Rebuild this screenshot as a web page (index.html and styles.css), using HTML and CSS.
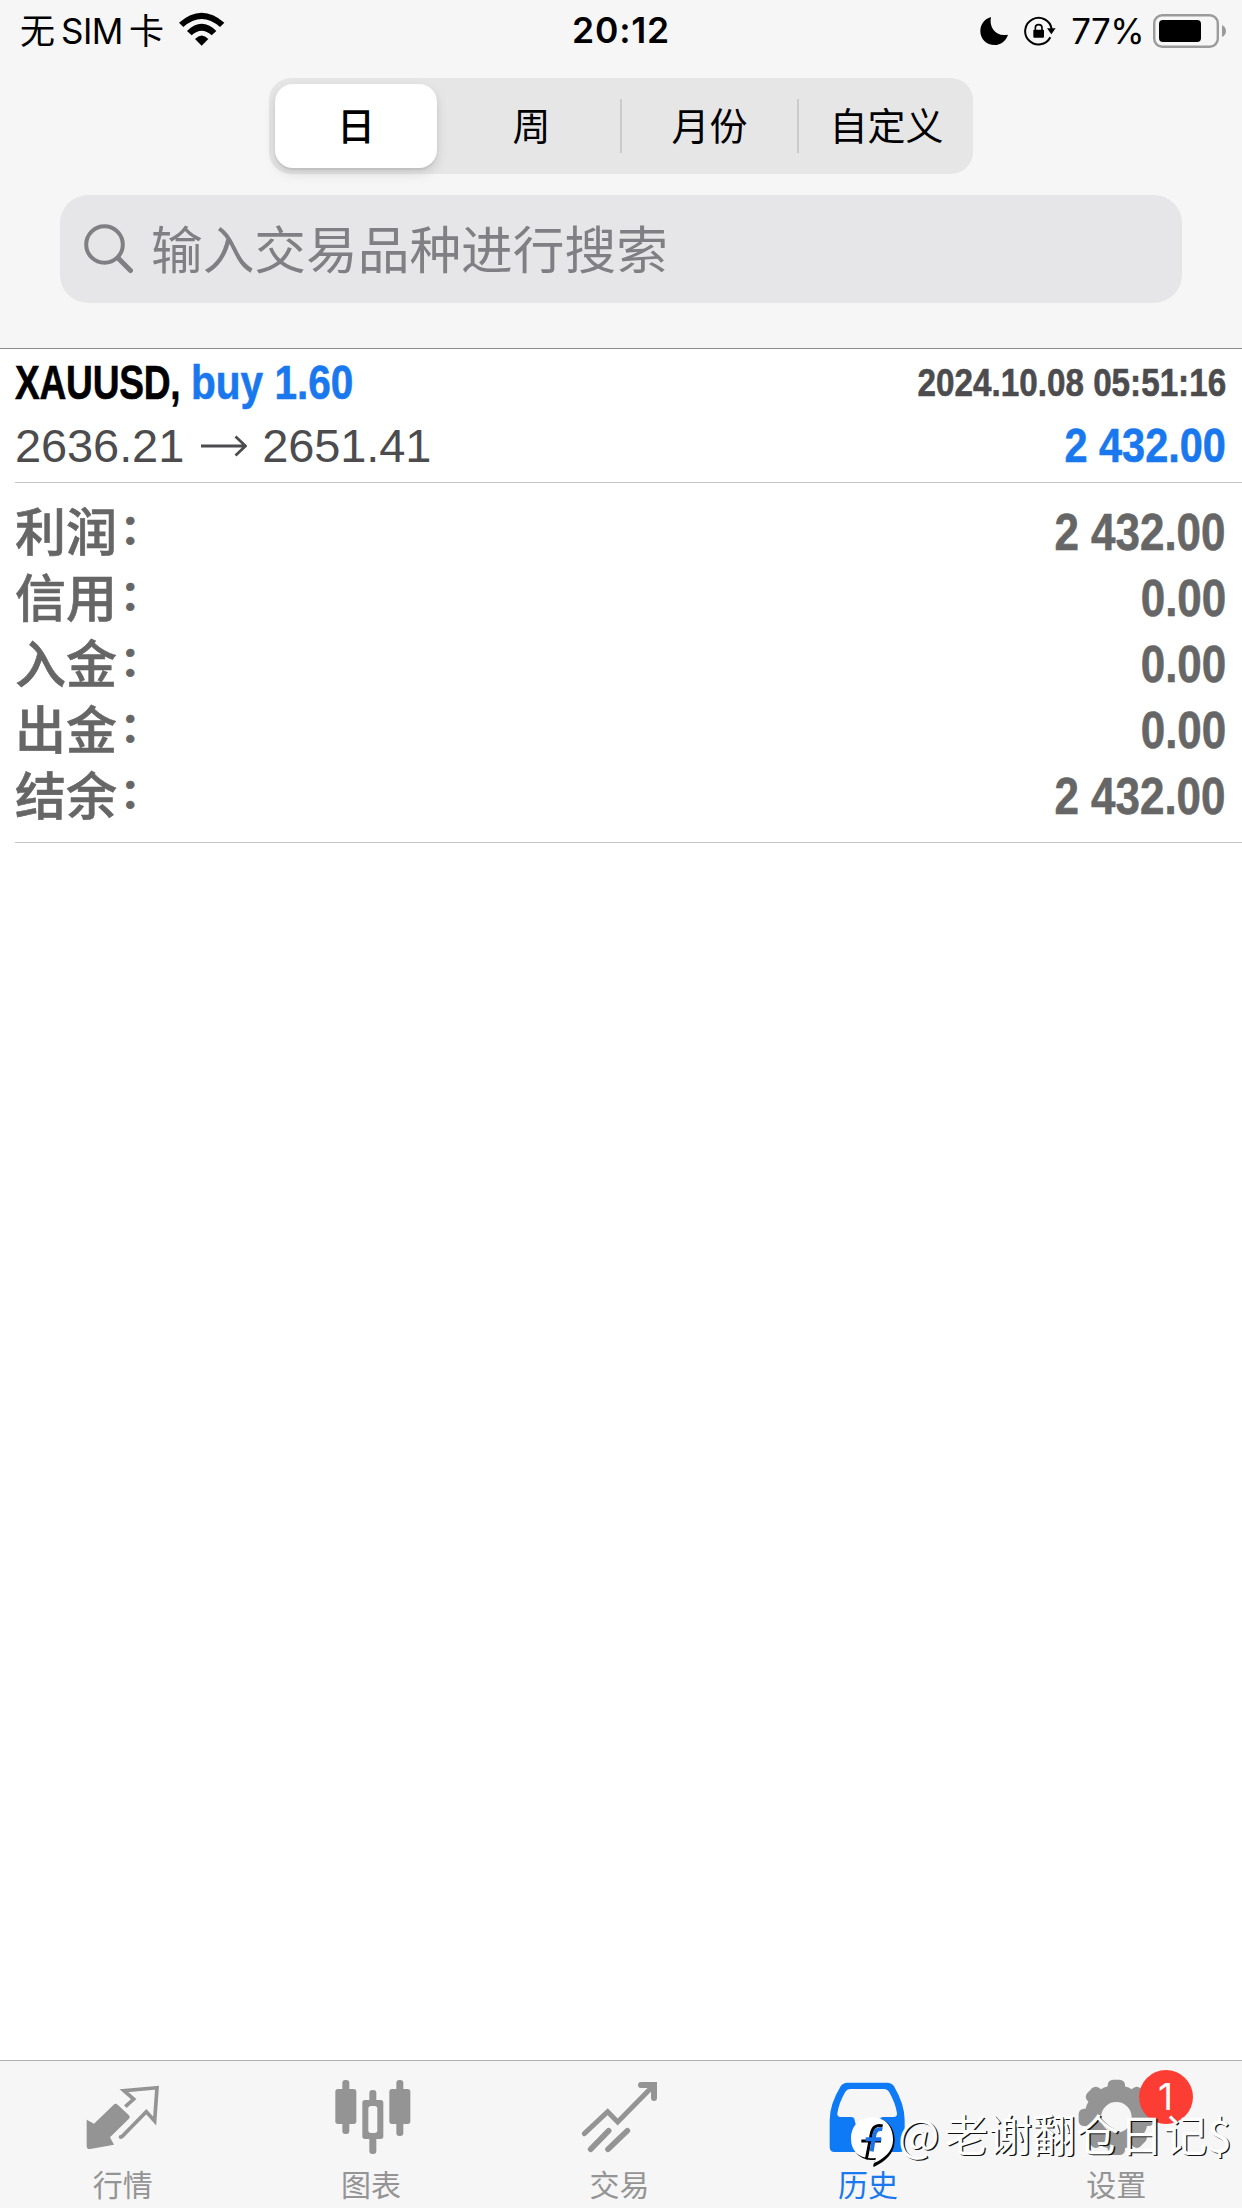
FILE: index.html
```html
<!DOCTYPE html>
<html lang="zh-CN">
<head>
    <meta charset="UTF-8">
    <meta name="viewport" content="width=device-width, initial-scale=1.0">
    <title>历史</title>
    <link rel="stylesheet" href="styles.css">
</head>
<body>
    <div class="app">
        <header class="header">
            <div class="status-bar">
                <div class="status-left">
                    <span class="carrier">无<span class="sim">SIM</span>卡</span>
                    <svg class="wifi" width="46" height="34" viewBox="538 37 138 102">
                        <path d="M538 69Q606 9 674 69L661 82Q606 34 551 82Z"/>
                        <path d="M562 94Q606 51 650 94L636 107Q606 80 576 107Z"/>
                        <path d="M586 118Q606 97 626 118L606 138Z"/>
                    </svg>
                </div>
                <span class="time">20:12</span>
                <div class="status-right">
                    <svg class="moon" width="28" height="28" viewBox="302 51 84 84">
                        <path d="M335 51C328 82 350 112 386 104C380 123 364 135 346 135C321 135 303 117 303 93C303 73 315 57 335 51Z"/>
                    </svg>
                    <svg class="lock" width="32" height="30" viewBox="433 51 96 90">
                        <path d="M512 115A40 40 0 1 1 516 90" fill="none" stroke="#000" stroke-width="6"/>
                        <path d="M502 88H528L515 106Z"/>
                        <rect x="461" y="92" width="32" height="24" rx="3"/>
                        <path d="M467 94V86Q467 77 477 77T487 86V94" fill="none" stroke="#000" stroke-width="5"/>
                    </svg>
                    <span class="percent">77%</span>
                    <svg class="battery" width="74" height="34" viewBox="0 0 74 34">
                        <rect x="1.2" y="1.2" width="63.6" height="31.6" rx="8" fill="none" stroke="#9b9b9b" stroke-width="2.4"/>
                        <rect x="6" y="6" width="42" height="22" rx="4"/>
                        <path d="M69 11Q73 13 73 17T69 23Z" fill="#9b9b9b"/>
                    </svg>
                </div>
            </div>
            <div class="segments">
                <div class="segment active">日</div>
                <div class="segment">周</div>
                <div class="segment divided">月份</div>
                <div class="segment divided">自定义</div>
            </div>
            <div class="search">
                <svg width="50" height="50" viewBox="0 0 50 50">
                    <circle cx="20.5" cy="20.5" r="18.3" fill="none" stroke="#808084" stroke-width="4"/>
                    <path d="M34 34L46.5 46.5" stroke="#808084" stroke-width="5" stroke-linecap="round"/>
                </svg>
                <span>输入交易品种进行搜索</span>
            </div>
        </header>

        <main class="content">
            <section class="deal">
                <div class="row">
                    <div class="symbol"><span class="name">XAUUSD,</span> <span class="buy">buy 1.60</span></div>
                    <span class="date">2024.10.08 05:51:16</span>
                </div>
                <div class="row">
                    <div class="prices">
                        <span>2636.21</span>
                        <svg width="46" height="22" viewBox="0 0 46 22">
                            <path d="M0 11H44M34.5 1.5L44.5 11L34.5 20.5" fill="none" stroke="#4c4c4e" stroke-width="2.8"/>
                        </svg>
                        <span>2651.41</span>
                    </div>
                    <span class="profit">2 432.00</span>
                </div>
            </section>
            <section class="summary">
                <div class="sum-row"><span class="label">利润<i>：</i></span><span class="value">2 432.00</span></div>
                <div class="sum-row"><span class="label">信用<i>：</i></span><span class="value">0.00</span></div>
                <div class="sum-row"><span class="label">入金<i>：</i></span><span class="value">0.00</span></div>
                <div class="sum-row"><span class="label">出金<i>：</i></span><span class="value">0.00</span></div>
                <div class="sum-row"><span class="label">结余<i>：</i></span><span class="value">2 432.00</span></div>
            </section>
        </main>

        <nav class="tabs">
            <div class="tab">
                <svg width="84" height="80" viewBox="127 78 252 240">
                    <path d="M222 164Q228 159 234 164L267 195Q273 201 267 207L211 262L223 284L152 297Q141 299 141 287V209L163 221Z"/>
                    <path d="M257 170L282 147L253 122L352 113L345 213L320 185L245 262" fill="none" stroke="#949494" stroke-width="11"/>
                    <circle cx="243" cy="261" r="6"/>
                </svg>
                <span>行情</span>
            </div>
            <div class="tab">
                <svg width="84" height="80" viewBox="872 78 252 240">
                    <rect x="885" y="117" width="63" height="105" rx="8"/>
                    <rect x="906" y="90" width="21" height="162" rx="9"/>
                    <rect x="1047" y="117" width="63" height="105" rx="8"/>
                    <rect x="1068" y="90" width="21" height="168" rx="9"/>
                    <rect x="987" y="120" width="21" height="192" rx="9"/>
                    <rect x="966" y="150" width="63" height="117" rx="8"/>
                    <rect x="984" y="168" width="27" height="81" rx="8" fill="#f6f6f6"/>
                </svg>
                <span>图表</span>
            </div>
            <div class="tab">
                <svg width="84" height="80" viewBox="117 78 252 240">
                    <g fill="none" stroke="#949494" stroke-linecap="round">
                        <path d="M133 251L203 185L233 216L337 110" stroke-width="15"/>
                        <path d="M303 105H342V144" stroke-width="18"/>
                        <path d="M152 298L206 242M204 298L262 242" stroke-width="17"/>
                    </g>
                </svg>
                <span>交易</span>
            </div>
            <div class="tab active">
                <svg width="84" height="80" viewBox="862 78 252 240">
                    <path fill-rule="evenodd" d="M923 98H1043Q1056 98 1063 109Q1095 163 1095 211V291Q1095 306 1080 306H885Q870 306 870 291V211Q870 163 903 109Q910 98 923 98ZM931 117Q922 117 917 125Q897 160 893 190Q892 201 903 201H934Q944 201 945 211Q948 235 968 235H998Q1017 235 1020 211Q1021 201 1031 201H1062Q1073 201 1072 190Q1068 160 1048 125Q1043 117 1034 117Z"/>
                </svg>
                <span>历史</span>
            </div>
            <div class="tab">
                <svg width="84" height="80" viewBox="767 78 252 240">
                    <circle cx="888" cy="202" r="71" fill="none" stroke="#949494" stroke-width="50"/>
                    <g>
                        <rect x="862" y="89" width="52" height="60" rx="16"/>
                        <rect x="862" y="89" width="52" height="60" rx="16" transform="rotate(45 888 202)"/>
                        <rect x="862" y="89" width="52" height="60" rx="16" transform="rotate(90 888 202)"/>
                        <rect x="862" y="89" width="52" height="60" rx="16" transform="rotate(135 888 202)"/>
                        <rect x="862" y="89" width="52" height="60" rx="16" transform="rotate(180 888 202)"/>
                        <rect x="862" y="89" width="52" height="60" rx="16" transform="rotate(225 888 202)"/>
                        <rect x="862" y="89" width="52" height="60" rx="16" transform="rotate(270 888 202)"/>
                        <rect x="862" y="89" width="52" height="60" rx="16" transform="rotate(315 888 202)"/>
                    </g>
                </svg>
                <span>设置</span>
                <b class="badge">1</b>
            </div>
            <div class="watermark">
                <svg width="48" height="52" viewBox="90 198 144 156">
                    <path d="M160 204C202 204 224 234 224 270C224 312 196 334 163 350Q158 352 160 344L166 330C119 332 95 304 95 266C95 230 120 204 160 204Z" fill="#000"/>
                    <path d="M156 202C198 202 219 232 219 268C219 308 190 326 162 340L168 324C117 330 93 302 93 266C93 228 118 202 156 202Z" fill="#fff"/>
                    <path d="M188 228Q158 220 153 256L139 328M124 273H183" fill="none" stroke="#000" stroke-width="9"/>
                    <path d="M187 238Q166 233 162 260L155 304M137 268H184" fill="none" stroke="#1a73ea" stroke-width="12"/>
                </svg>
                <span class="handle"><span class="at">@</span>老谢翻仓日记$</span>
            </div>
        </nav>
    </div>
</body>
</html>
```
FILE: styles.css
```css
* {
    box-sizing: border-box;
}
body {
    margin: 0;
    background: #fff;
    font-family: "Liberation Sans", "Noto Sans CJK SC", sans-serif;
    color: #000;
}
svg {
    display: block;
    flex: none;
}
.app {
    width: 1242px;
    height: 2208px;
    display: flex;
    flex-direction: column;
    overflow: hidden;
}
.header {
    height: 349px;
    background: #f6f6f6;
    border-bottom: 1px solid #8a8a8c;
}

/* status bar */
.status-bar {
    height: 62px;
    padding: 0 15px 0 20px;
    display: grid;
    grid-template-columns: 1fr auto 1fr;
    align-items: center;
    font-family: Inter, "Noto Sans CJK SC", sans-serif;
    font-size: 35px;
    line-height: 62px;
}
.status-left, .status-right {
    display: flex;
    align-items: center;
}
.status-right {
    justify-content: flex-end;
}
.sim {
    margin: 0 6px;
    letter-spacing: -0.5px;
}
.wifi {
    margin-left: 15px;
    margin-top: -4px;
}
.time {
    margin-right: 5px;
    font-size: 35.5px;
    font-weight: 600;
    letter-spacing: 0.8px;
}
.lock {
    margin-left: 16px;
}
.percent {
    margin: 0 9px 0 15px;
    letter-spacing: -0.6px;
}

/* period switch */
.segments {
    width: 704px;
    height: 96px;
    margin: 16px auto 0;
    padding: 6px 0 6px 6px;
    display: flex;
    align-items: center;
    border-radius: 22px;
    background: #e6e6e7;
}
.segment {
    flex: none;
    width: 177px;
    height: 54px;
    font-family: "Noto Sans CJK SC", sans-serif;
    font-size: 38px;
    line-height: 50px;
    text-align: center;
}
.segment.active {
    width: 162px;
    height: 84px;
    margin-right: 6px;
    line-height: 80px;
    font-weight: 500;
    border-radius: 18px;
    background: #fff;
    box-shadow: 0 5px 12px rgba(0, 0, 0, 0.13), 0 2px 2px rgba(0, 0, 0, 0.08);
}
.segment.divided {
    border-left: 2px solid #cbcbcd;
}

/* search field */
.search {
    height: 108px;
    margin: 21px 60px 0;
    padding-left: 24px;
    display: flex;
    align-items: center;
    gap: 17px;
    border-radius: 28px;
    background: #e6e6e8;
    color: #808084;
    font-family: "Noto Sans CJK SC", sans-serif;
    font-size: 51.7px;
    line-height: 104px;
}
.search span {
    height: 108px;
}

.content {
    flex: 1;
}
.deal, .summary {
    margin-left: 15px;
    border-bottom: 1px solid #c6c6c9;
}
.deal {
    height: 134px;
    padding: 2px 16px 0 0;
}
.row {
    height: 63px;
    display: flex;
    justify-content: space-between;
    align-items: center;
    line-height: 63px;
}
/* the bold texts are set condensed */
.symbol, .date, .profit, .value {
    font-weight: bold;
    white-space: pre;
    -webkit-text-stroke: 0.6px;
}
.symbol {
    font-size: 48px;
    transform: scaleX(0.845);
    transform-origin: left;
}
.name {
    display: inline-block;
    margin-right: -19px;
    letter-spacing: -0.3px;
    transform: scaleX(0.915);
    transform-origin: left;
}
.buy, .profit {
    color: #1a78ee;
}
.date {
    font-size: 39px;
    color: #4c4c4e;
    transform: scaleX(0.852);
    transform-origin: right;
}
.profit {
    font-size: 48px;
    transform: scaleX(0.864);
    transform-origin: right;
}
.prices {
    display: flex;
    align-items: center;
    font-size: 47px;
    letter-spacing: -0.1px;
    color: #4c4c4e;
}
.prices svg {
    margin: 0 15px 0 17px;
}
.summary {
    height: 360px;
    padding: 17px 16px 0 0;
    color: #666;
}
.sum-row {
    height: 66px;
    display: flex;
    justify-content: space-between;
    line-height: 66px;
}
.label {
    font-family: "Noto Sans CJK SC", sans-serif;
    font-size: 51px;
    font-weight: 500;
    line-height: 58px;
    -webkit-text-stroke: 0.6px;
}
.label i {
    margin-left: 3px;
    font-size: 41px;
    font-style: normal;
    font-weight: bold;
    line-height: 0;
    vertical-align: 7px;
}
.value {
    font-size: 51px;
    transform: scaleX(0.862);
    transform-origin: right;
}

/* bottom tabs */
.tabs {
    position: relative;
    height: 148px;
    display: flex;
    background: #f6f6f6;
    border-top: 1px solid #b0b0b2;
}
.tab {
    position: relative;
    flex: 1;
    display: flex;
    flex-direction: column;
    align-items: center;
    padding-top: 15px;
    color: #949494;
    fill: #949494;
    font-family: "Noto Sans CJK SC", sans-serif;
    font-size: 30px;
}
.tab span {
    padding-right: 3px;
    line-height: 54px;
}
.tab.active {
    color: #1a78ee;
    fill: #0f7af5;
}
.badge {
    position: absolute;
    left: 145px;
    top: 9px;
    width: 54px;
    height: 54px;
    border-radius: 50%;
    background: #fc3d33;
    color: #fff;
    font-family: Inter, sans-serif;
    font-size: 37px;
    font-weight: 400;
    line-height: 54px;
    text-align: center;
}
.watermark {
    position: absolute;
    left: 850px;
    top: 55px;
    display: flex;
    align-items: flex-start;
    color: #fff;
    font-family: "Noto Sans CJK SC", sans-serif;
    font-size: 43.8px;
    white-space: nowrap;
    text-shadow: 1.4px 1.2px 0 #111;
}
.handle {
    line-height: 34px;
}
.at {
    margin-right: 5px;
}
```
